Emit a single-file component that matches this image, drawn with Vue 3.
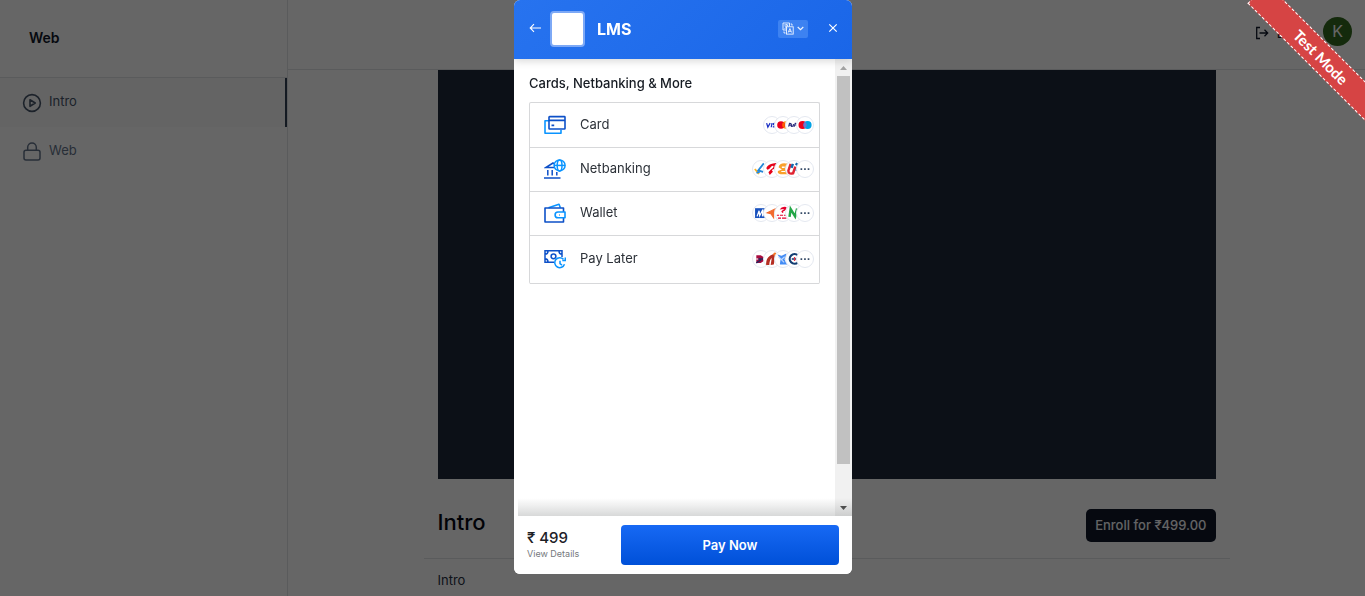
<script setup>
const methods = [
  { id: 'card', label: 'Card', brands: ['visa', 'mastercard', 'rupay', 'maestro'] },
  { id: 'netbanking', label: 'Netbanking', brands: ['sbi', 'airtel', 'bob', 'union', 'more'] },
  { id: 'wallet', label: 'Wallet', brands: ['mobikwik', 'freecharge', 'airtelbank', 'payzapp', 'more'] },
  { id: 'paylater', label: 'Pay Later', brands: ['axis', 'icici', 'lazy', 'hdfc', 'more'] },
]
</script>

<template>
  <div class="page">
    <aside class="sidebar">
      <h1 class="course">Web</h1>
      <nav>
        <a href="#" class="lesson active">
          <svg width="20" height="20" viewBox="0 0 20 20" fill="none" stroke="currentColor" stroke-width="1.6" stroke-linejoin="round">
            <circle cx="10" cy="10" r="8.4" /><path d="M8 6.7 13.2 10 8 13.3Z" />
          </svg>
          <span>Intro</span>
        </a>
        <a href="#" class="lesson">
          <svg width="20" height="20" viewBox="0 0 20 20" fill="none" stroke="currentColor" stroke-width="1.5">
            <rect x="2" y="8.2" width="16" height="9.8" rx="2" /><path d="M5.7 8.2V5.3a4.3 4.3 0 0 1 8.6 0v2.9" />
          </svg>
          <span>Web</span>
        </a>
      </nav>
    </aside>
    <div class="main">
      <header class="topbar">
        <a href="#" class="exit">
          <svg width="14" height="14" viewBox="0 0 14 14" fill="none" stroke="currentColor" stroke-width="1.3">
            <path d="M5 1.5H1.7v11H5M4.5 7H12.5M9.5 3.8 12.7 7 9.5 10.2" />
          </svg>
          <span>Exit</span>
        </a>
        <span class="avatar">K</span>
      </header>
      <main class="content">
        <div class="video"></div>
        <div class="title-row">
          <h2>Intro</h2>
          <button class="enroll">Enroll for ₹499.00</button>
        </div>
        <p class="description">Intro</p>
      </main>
    </div>
  </div>

  <div class="backdrop">
    <div class="ribbon">Test Mode</div>
    <section class="dialog" role="dialog" aria-label="LMS">
      <header class="dialog-head">
        <button class="plain" aria-label="Back">
          <svg width="13" height="10" viewBox="0 0 13 10" fill="none" stroke="currentColor" stroke-width="1.1"><path d="M12 5H1.5M5 1.2 1.2 5 5 8.8" /></svg>
        </button>
        <span class="logo"></span>
        <strong>LMS</strong>
        <button class="language" aria-label="Language">
          <svg width="12" height="13" viewBox="0 0 12 13" fill="none" stroke="currentColor" stroke-width=".9">
            <path d="M4.5 8H1V1h6.5v3.5M2.3 3h4M4.3 2v1M5.5 3C5 5 4 6 2.5 6.6M3 4.2l2 2" /><rect x="4.5" y="4.8" width="6.7" height="7.3" /><path d="M6.2 10.5 7.9 6.5 9.6 10.5M6.8 9.3h2.2" /><path d="M2 9.5V11h1.5M8.7 2H10v1.7" />
          </svg>
          <svg width="7" height="5" viewBox="0 0 7 5" fill="none" stroke="currentColor" stroke-width="1.1"><path d="M.7 1l2.8 2.7L6.3 1" /></svg>
        </button>
        <button class="plain close" aria-label="Close">
          <svg width="10" height="10" viewBox="0 0 10 10" fill="none" stroke="currentColor" stroke-width="1.2"><path d="m1.3 1.3 7.4 7.4M8.7 1.3 1.3 8.7" /></svg>
        </button>
      </header>

      <div class="dialog-body">
        <div class="options">
          <h3>Cards, Netbanking &amp; More</h3>
          <div class="methods">
            <button v-for="m in methods" :key="m.id" class="method" :class="m.id">
              <svg v-if="m.id === 'card'" class="icon" viewBox="0 0 22 20" fill="none" stroke-width="1.6" stroke-linejoin="round">
                <path class="light" d="M5 5.8H1v12.4h16V15" /><rect class="dark" x="5" y="1.6" width="16" height="12.4" rx=".6" /><path class="dark" d="M5 5.4h16M7.5 10.4h2.7" />
              </svg>
              <svg v-else-if="m.id === 'netbanking'" class="icon" viewBox="0 0 22 20" fill="none" stroke-width="1.5">
                <path class="dark" d="M0 19h16.5M3.8 11v5.5M8.2 11v5.5M12.8 13v3.5M10.3 8.6H1.8L9 4l1.2.8" />
                <g class="light"><circle cx="15.6" cy="6.4" r="5.5" /><ellipse cx="15.6" cy="6.4" rx="2.4" ry="5.5" /><path d="M10.1 6.4h11" /></g>
              </svg>
              <svg v-else-if="m.id === 'wallet'" class="icon" viewBox="0 0 22 20" fill="none" stroke-width="1.6" stroke-linejoin="round">
                <path class="light" d="M4.5 4.8 15 1.2l1.4 3.6" /><path class="dark" d="M19.5 9V5H1v14h18.5v-4" /><path class="light" d="M21 9h-7a2.8 2.8 0 0 0 0 5.8h7ZM15 12h.8" />
              </svg>
              <svg v-else class="icon" viewBox="0 0 22 20" fill="none" stroke-width="1.5">
                <path class="dark" d="M10 13.2H1V1.8h17V8M1 5.3c2 0 3-1.2 3-3.3M1 9.7c2 0 3 1.2 3 3.3M18 5.3c-2 0-3-1.2-3-3.3" /><circle class="dark" cx="9.5" cy="7.3" r="2.4" />
                <path class="light" d="M19.5 10.3a5 5 0 1 0 1 5M21.3 8.5v3h-3M16 11.7v3l2 1.4" />
              </svg>
              <span class="label">{{ m.label }}</span>
              <span class="brands">
                <svg v-for="b in m.brands" :key="b" class="brand" viewBox="0 0 18 18" fill="none">
                  <circle cx="9" cy="9" r="8.5" fill="#fff" stroke="#e4e8f0" />
                  <path v-if="b === 'visa'" d="M4.2 7.3 5.3 11l2-3.7M9 7.3 8.3 11M12 7.6c-2-.6-2.5.8-1 1.4s.6 2-1.3 1.4M12 11l1.7-3.7.6 3.7M12.5 9.9h1.7" stroke="#1a2fc4" stroke-width="1.1" />
                  <g v-else-if="b === 'mastercard'"><circle cx="11.5" cy="9" r="3.3" fill="#ff9f1a" /><circle cx="7.2" cy="9" r="3.4" fill="#eb001b" /><path d="M9.4 6.4a3.4 3.4 0 0 1 0 5.2 3.4 3.4 0 0 1 0-5.2" fill="#ff5f00" /></g>
                  <g v-else-if="b === 'rupay'" stroke="#292b7c"><path d="M4.2 10.5 5 7.5q2.3 0 1.3 1.7H5M7 8.4l-.3 1.8 1.5-.2.5-1.7M9.3 10.5l.8-3q2 0 1.3 1.7h-1M12 10l1-1.5M13.4 8l.3 1.8L14.8 8" /></g>
                  <g v-else-if="b === 'maestro'"><circle cx="6.8" cy="9" r="3.6" fill="#eb001b" /><circle cx="11.3" cy="9" r="3.6" fill="#00a2e5" /><path d="M9 6.1a3.6 3.6 0 0 1 0 5.8 3.6 3.6 0 0 1 0-5.8" fill="#7375cf" /></g>
                  <g v-else-if="b === 'sbi'" stroke-width="1.6"><path d="m3.5 9 3.7 4.3" stroke="#ffb31f" /><path d="m11.5 4-5 6.3 4.4 1.2" stroke="#2588d8" /><path d="m5 12.5 3-1.2" stroke="#2588d8" /></g>
                  <path v-else-if="b === 'airtel'" d="M4 8.5C4 5.5 9 4 13.3 3.7c1 2.5-1.3 4.8-4.5 6.1l1 1.6L7 14.3 5.8 12 8 9.5C10 8.3 11 6.8 10 6 8 5.8 7.3 9.3 5 9.6Z" fill="#e60019" />
                  <g v-else-if="b === 'bob'" fill="#f9a02c"><path d="M5 7.5Q6 3.3 11.5 4h2v9.7H6.8q-3.2-.8-2.3-3L8 9.4Z" /><path d="M8 6.8h2.5v1.2H8Zm-.5 3.9H11v1H7.5Z" fill="#fff" /></g>
                  <g v-else-if="b === 'union'" stroke-width="2.2"><path d="m6 4.5-2 6q0 3.5 4.2 2.3l2-6" stroke="#e02332" /><path d="M8 4.5 6.8 8M10.5 4l2.3 2-1.6 4.6" stroke="#1267ae" /></g>
                  <g v-else-if="b === 'mobikwik'"><path d="M3.7 4.7h10.6v8.8H3.7Z" fill="#1750bd" /><path d="m5.5 12 1.8-5 .5 4.5L10.7 6l-.4 6 2.2-5" stroke="#fff" stroke-width="1.1" /></g>
                  <path v-else-if="b === 'freecharge'" d="m4.5 8.9 8.2-4-2.3 4.7v3.6L8 9.6Z" fill="#f26a2e" stroke="#f26a2e" />
                  <g v-else-if="b === 'airtelbank'" fill="#e4002b"><path d="M6 5.8q2-3.3 6-2.2.5 2.7-3 4l.5.7-1.2.7-.8-1.6 2.7-2Z" /><path d="M3.5 10.5h2v1h-2Zm2.8 0H9v1H6.3Zm3.5 0h3v1h-3Zm-5.2 2.6h2.6v1H4.6Zm3.5 0H12v1H8.1Z" /></g>
                  <path v-else-if="b === 'payzapp'" d="m5 12.5 1-7 4 6.6 1.8-7" stroke="#22a647" stroke-width="2.2" />
                  <g v-else-if="b === 'axis'"><path d="M4.8 5.7h4L14 9l-5.2 3.6h-4Z" fill="#a80b3f" /><path d="M6.5 9h7M4.8 12.4 9 9.7" stroke="#25265e" stroke-width="1.3" /><path d="m5 8 2 1-2 1Z" fill="#fff" /></g>
                  <g v-else-if="b === 'icici'"><path d="M3.8 14.4Q3 6 12.4 4l-1.8 9.8-2.8.5 1-6.2Q6.8 9.5 6.6 14.4Z" fill="#b52e22" /><circle cx="11.6" cy="4.7" r="1.5" fill="#f47728" /></g>
                  <g v-else-if="b === 'lazy'"><path d="m4 5 3.7 1L12 4.2v3L10.2 9l2.6 4.8H6.2L6.8 9Z" fill="#438cf5" /><path d="m5 7 5 5M10.5 7l-3 2.7" stroke="#bdd8ff" /></g>
                  <g v-else-if="b === 'hdfc'"><path d="M12.5 5.8A4.3 4.3 0 1 0 12.5 12" stroke="#123d72" stroke-width="2" /><path d="M7 9h6" stroke="#123d72" stroke-width="1.4" /><path d="M9.5 7.2v3.6" stroke="#e62f40" stroke-width="1.2" /></g>
                  <path v-else d="M5 8.3h1.5v1.5H5Zm3.2 0h1.5v1.5H8.2Zm3.2 0h1.5v1.5h-1.5Z" fill="#344966" />
                </svg>
              </span>
            </button>
          </div>
        </div>
        <div class="scrollbar" aria-hidden="true">
          <svg class="arrow" width="7" height="4" viewBox="0 0 7 4"><path d="M0 4 3.5 0 7 4Z" fill="#a3a3a3" /></svg>
          <div class="thumb"></div>
          <svg class="arrow" width="7" height="4" viewBox="0 0 7 4"><path d="M0 0h7L3.5 4Z" fill="#505050" /></svg>
        </div>
      </div>

      <footer class="dialog-foot">
        <div class="amount">
          <span class="price">₹ 499</span>
          <a href="#">View Details</a>
        </div>
        <button class="pay">Pay Now</button>
      </footer>
    </section>
  </div>
</template>

<style>
html, body { overflow: hidden; }
body { margin: 0; background: #fff; }
</style>

<style scoped>
* { box-sizing: border-box; }
.page, .backdrop { font-family: Inter, "Liberation Sans", sans-serif; }
.page { display: flex; min-height: 100vh; }
h1, h2, h3, p { margin: 0; }
a { color: inherit; text-decoration: none; }
button { font-family: inherit; border: 0; cursor: pointer; }
svg { flex: none; }

.sidebar { width: 288px; flex: none; border-right: 1px solid #e0e3e6; }
.course { height: 78px; padding: 0 29px; line-height: 76px; font-size: 14px; font-weight: 600; color: #0f172a; border-bottom: 1px solid #e0e3e6; }
.lesson { display: flex; align-items: center; gap: 7px; height: 49px; padding-left: 22px; font-size: 13px; line-height: 20px; color: #64748b; }
.lesson span { padding-bottom: 4px; }
.lesson.active { color: #475569; background: #f9fafb; border-right: 2px solid #334155; }
.main { flex: 1; }
.topbar { display: flex; align-items: center; justify-content: flex-end; height: 70px; padding: 0 13px 6px 0; border-bottom: 1px solid #e0e3e6; }
.exit { display: flex; align-items: center; gap: 8px; margin: 2px 24px 0 0; font-size: 13px; color: #0f172a; }
.avatar { width: 29px; height: 29px; border-radius: 50%; background: #33691e; color: #fff; text-align: center; line-height: 29px; font-size: 16px; }
.content { max-width: 806px; margin: 0 auto; }
.video { height: 409px; margin: 0 14px; background: #1e293b; }
.title-row { display: flex; align-items: center; justify-content: space-between; height: 80px; padding: 13px 14px 0; border-bottom: 1px solid #e0e3e6; }
h2 { padding-bottom: 6px; font-size: 22px; line-height: 28px; font-weight: 500; color: #030712; }
.enroll { height: 33px; padding: 0 9px; border-radius: 5px; background: #0f172a; color: #f8fafc; font-size: 13px; font-weight: 500; }
.description { padding: 11px 14px; font-size: 13px; line-height: 20px; color: #27303f; }

.backdrop { position: fixed; inset: 0; overflow: hidden; padding-left: 1px; background: rgba(0, 0, 0, .6); }
.ribbon { position: absolute; top: 43px; right: -46px; width: 180px; height: 28px; transform: rotate(45deg); background: #d64444; border: 1px dashed #fff; color: #fff; font-family: Lato, Inter, sans-serif; font-size: 15px; font-weight: 700; line-height: 26px; text-align: center; }
.dialog { display: flex; flex-direction: column; width: 338px; height: calc(100% - 22px); margin: 0 auto; border-radius: 6px; overflow: hidden; background: #fff; }
.dialog-head { position: relative; z-index: 1; display: flex; align-items: center; flex: none; height: 59px; padding: 0 12px 2px 13px; background: linear-gradient(135deg, #2773ef, #1a66e8); color: #fff; box-shadow: 0 2px 8px rgba(0, 0, 0, .16); }
.plain { display: flex; padding: 2px; background: none; color: #fff; }
.plain:first-child { margin-bottom: 2px; }
.logo { width: 35px; height: 36px; margin: 0 12px 0 6px; border: 2px solid #7da9f6; border-radius: 4px; background: #fff; }
.dialog-head strong { font-size: 16px; font-weight: 700; }
.language { display: flex; align-items: center; justify-content: center; gap: 3px; width: 30px; height: 18px; margin-left: auto; padding: 0; border-radius: 2px; background: #3d82f1; color: #f0f6ff; }
.close { margin: 0 0 2px 18px; }
.dialog-body { display: flex; flex: 1; min-height: 0; position: relative; }
.dialog-body::after { content: ""; position: absolute; left: 4px; right: 0; bottom: 0; height: 18px; background: linear-gradient(transparent, rgba(60, 65, 65, .2)); }
.options { flex: 1; padding: 14px 15px 0; }
h3 { font-size: 13px; line-height: 20px; font-weight: 500; color: #161b22; }
.methods { margin-top: 9px; border: 1px solid #d7d8da; border-bottom: 0; border-radius: 2px; }
.method { display: flex; align-items: center; width: 100%; height: 44px; padding: 0 5px 1px 14px; background: none; border-bottom: 1px solid #d7d8da; color: #2c3138; font-size: 13px; line-height: 20px; }
.method.card { height: 45px; padding-bottom: 0; }
.method.paylater { height: 48px; }
.icon { width: 22px; height: 20px; margin-right: 14px; }
.dark { stroke: #0d50c8; }
.light { stroke: #0a94ff; }
.label { padding-bottom: 2px; }
.brands { display: flex; margin-left: auto; }
.brand { width: 18px; height: 18px; margin-left: -7px; }
.brand > :not(:first-child) { transform: scale(1.12); transform-origin: 9px 9px; }
.scrollbar { display: flex; flex-direction: column; align-items: center; width: 17px; background: #f1f1f1; }
.arrow { margin: 7px 0 6px; }
.thumb { width: 13px; height: 85%; margin-bottom: auto; background: #c1c1c1; }
.dialog-foot { display: flex; align-items: center; flex: none; height: 58px; padding: 0 13px; background: #fff; }
.amount { display: flex; flex-direction: column; width: 94px; }
.price { font-size: 15px; line-height: 18px; font-weight: 500; color: #1c2026; }
.amount a { font-size: 9px; line-height: 14px; color: #76797d; }
.pay { flex: 1; height: 40px; border-radius: 4px; padding-bottom: 2px; background: linear-gradient(#1769f4, #0050d8); color: #fff; font-size: 13px; font-weight: 600; }
</style>
